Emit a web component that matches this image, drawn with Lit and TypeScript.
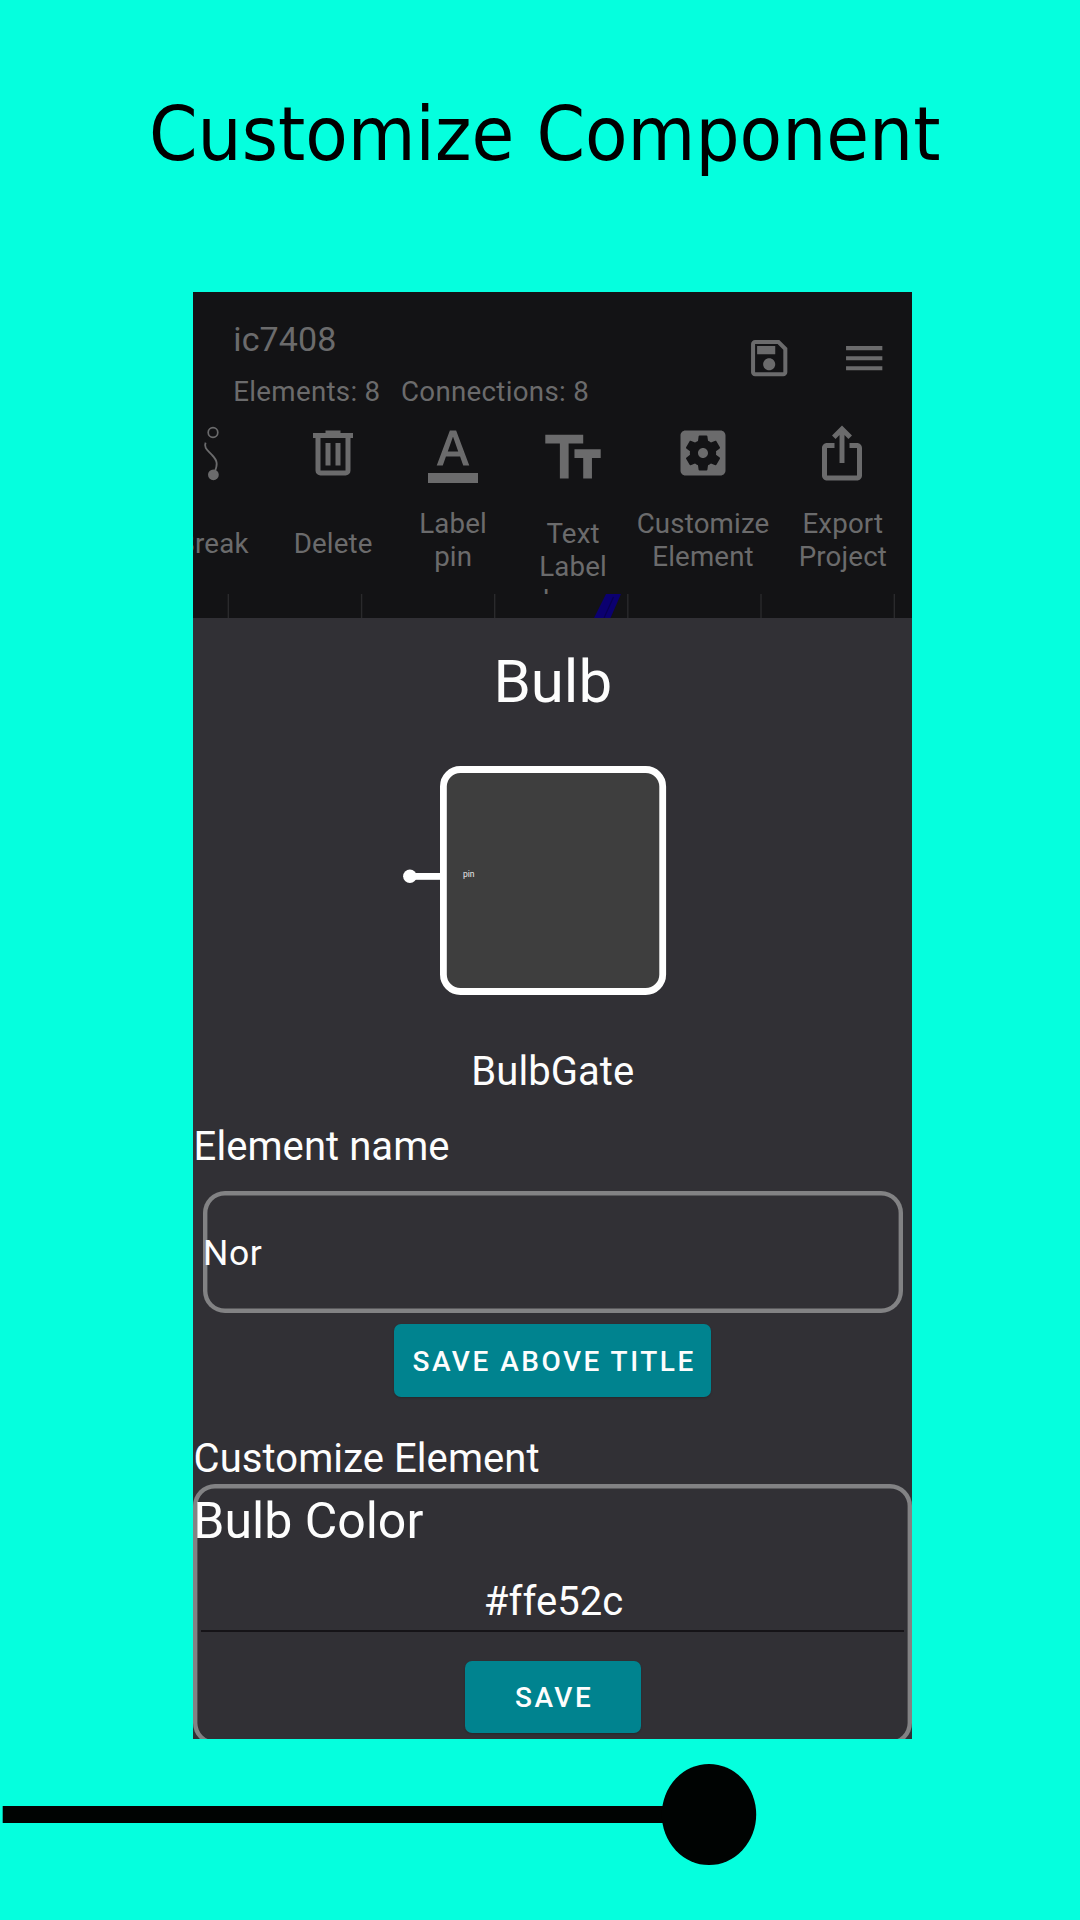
import { LitElement, html, css, svg } from "lit";
import { customElement, property } from "lit/decorators.js";

const ICONS: Record<string, string> = {
  delete:
    "M9,3V4H4V6H5V19A2,2 0 0,0 7,21H17A2,2 0 0,0 19,19V6H20V4H15V3H9M7,6H17V19H7V6M9,8V17H11V8H9M13,8V17H15V8H13Z",
  labelPin:
    "M2 20h20v4H2v-4zm3.49-3h2.42l1.27-3.58h5.65L16.09 17h2.42L13.25 3h-2.5L5.49 17zm4.42-5.61 2.03-5.79h.12l2.03 5.79H9.91z",
  textLabel: "M2.5 4v3h5v12h3V7h5V4h-13zm19 5h-9v3h3v7h3v-7h3V9z",
  customize:
    "M12 10c-1.1 0-2 .9-2 2s.9 2 2 2 2-.9 2-2-.9-2-2-2zm7-7H5c-1.11 0-2 .9-2 2v14c0 1.1.89 2 2 2h14c1.11 0 2-.9 2-2V5c0-1.1-.89-2-2-2zm-1.75 9c0 .23-.02.46-.05.68l1.48 1.16c.13.11.17.3.08.45l-1.4 2.42c-.09.15-.27.21-.43.15l-1.74-.7c-.36.28-.76.51-1.18.69l-.26 1.85c-.03.17-.18.3-.35.3h-2.8c-.17 0-.32-.13-.35-.29l-.26-1.85c-.43-.18-.82-.41-1.18-.69l-1.74.7c-.16.06-.34 0-.43-.15l-1.4-2.42c-.09-.15-.05-.34.08-.45l1.48-1.16c-.03-.23-.05-.46-.05-.69s.02-.46.05-.68l-1.48-1.16c-.13-.11-.17-.3-.08-.45l1.4-2.42c.09-.15.27-.21.43-.15l1.74.7c.36-.28.76-.51 1.18-.69l.26-1.85c.03-.17.18-.3.35-.3h2.8c.17 0 .32.13.35.29l.26 1.85c.43.18.82.41 1.18.69l1.74-.7c.16-.06.34 0 .43.15l1.4 2.42c.09.15.05.34-.08.45l-1.48 1.16c.03.23.05.46.05.69z",
  export:
    "M16 5l-1.42 1.42-1.59-1.59V16h-1.98V4.83L9.42 6.42 8 5l4-4 4 4zm4 5v11c0 1.1-.9 2-2 2H6c-1.11 0-2-.9-2-2V10c0-1.11.89-2 2-2h3v2H6v11h12V10h-3V8h3c1.1 0 2 .89 2 2z",
  save:
    "M17 3H5c-1.11 0-2 .9-2 2v14c0 1.1.89 2 2 2h14c1.1 0 2-.9 2-2V7l-4-4zm2 16H5V5h11.17L19 7.83V19zm-7-7c-1.66 0-3 1.34-3 3s1.34 3 3 3 3-1.34 3-3-1.34-3-3-3zM6 6h9v4H6z",
  menu: "M3 18h18v-2H3v2zm0-5h18v-2H3v2zm0-7v2h18V6H3z",
};

@customElement("app-icon")
export class AppIcon extends LitElement {
  @property() name = "";

  static styles = css`
    :host {
      display: block;
      width: 60px;
      height: 60px;
    }
    .glyph {
      display: block;
      width: 100%;
      height: 100%;
      fill: currentColor;
    }
  `;

  render() {
    if (this.name === "break") {
      return html`<svg class="glyph" viewBox="0 0 60 60">
        ${svg`<circle cx="30" cy="9.5" r="4.8" fill="none" stroke="currentColor" stroke-width="1.7" />
          <path d="M22.6 19.6C20.4 25 25 27.5 29 32C35 38 34.5 42 31.8 48.5" fill="none" stroke="currentColor" stroke-width="1.8" />
          <circle cx="30.4" cy="51.8" r="5.4" />`}
      </svg>`;
    }
    return html`<svg class="glyph" viewBox="0 0 24 24">
      ${svg`<path fill-rule="evenodd" d=${ICONS[this.name]} />`}
    </svg>`;
  }
}

const TOOLS = [
  { icon: "break", lines: ["Break"], cls: "single" },
  { icon: "delete", lines: ["Delete"], cls: "single" },
  { icon: "labelPin", lines: ["Label", "pin"], cls: "" },
  { icon: "textLabel", lines: ["Text", "Label", "here"], cls: "large" },
  { icon: "customize", lines: ["Customize", "Element"], cls: "" },
  { icon: "export", lines: ["Export", "Project"], cls: "" },
];

@customElement("editor-toolbar")
export class EditorToolbar extends LitElement {
  static styles = css`
    :host {
      display: block;
      height: 326px;
      overflow: hidden;
      background: #131315;
      color: #6b6b6c;
      font-family: Roboto, sans-serif;
    }
    .header {
      display: flex;
      justify-content: space-between;
      box-sizing: border-box;
      height: 130.5px;
      padding: 26.7px 23.3px 0 40.3px;
    }
    .project {
      font-size: 34px;
      line-height: 40px;
      letter-spacing: 0.1px;
    }
    .stats {
      display: flex;
      gap: 20.5px;
      margin-top: 16px;
      font-size: 27.7px;
      line-height: 33px;
      letter-spacing: 0.3px;
      white-space: nowrap;
    }
    .actions {
      display: flex;
      gap: 47.4px;
      padding-top: 15.5px;
    }
    .actions app-icon {
      width: 48.4px;
      height: 48.4px;
    }
    .tools {
      display: grid;
      grid-template-columns: repeat(4, 120px) 139.8px 139.8px;
      height: 171.5px;
      margin-left: -40.3px;
      overflow: hidden;
    }
    .tool {
      display: flex;
      flex-direction: column;
      align-items: center;
      gap: 24.3px;
      font-size: 27.7px;
      line-height: 33.3px;
      letter-spacing: 0.15px;
      text-align: center;
    }
    .single {
      gap: 44.3px;
    }
    .large {
      gap: 24.6px;
    }
    .large app-icon {
      width: 70px;
      height: 70px;
    }
    .line {
      display: block;
      padding-left: 0.9px;
    }
    .line:nth-child(3) {
      padding-right: 6px;
    }
    .board {
      display: block;
      width: 719px;
      height: 24px;
    }
  `;

  render() {
    return html`
      <div class="header">
        <div>
          <div class="project">ic7408</div>
          <div class="stats"><span>Elements: 8</span><span>Connections: 8</span></div>
        </div>
        <div class="actions">
          <app-icon name="save"></app-icon>
          <app-icon name="menu"></app-icon>
        </div>
      </div>
      <div class="tools">
        ${TOOLS.map(
          (t) => html`<div class="tool ${t.cls}">
            <app-icon name=${t.icon}></app-icon>
            <div>${t.lines.map((l) => html`<span class="line">${l}</span>`)}</div>
          </div>`
        )}
      </div>
      <svg class="board" viewBox="0 0 719 24">
        ${[35.3, 168.6, 301.7, 434.8, 568, 701.3].map(
          (x) => svg`<rect x=${x - 0.7} y="0" width="1.4" height="24" fill="#2a2a2c" />`
        )}
        <path d="M413 0H428L417.5 24H401Z" fill="#0b0070" />
        <path d="M420.5 3L411 24" stroke="#090050" stroke-width="1.2" />
      </svg>
    `;
  }
}

@customElement("element-panel")
export class ElementPanel extends LitElement {
  static styles = css`
    :host {
      display: flex;
      flex-direction: column;
      align-items: center;
      height: 1121px;
      box-sizing: border-box;
      padding-top: 29.2px;
      overflow: hidden;
      background: #313035;
      color: #fdfdfd;
      font-family: Roboto, sans-serif;
    }
    .heading {
      flex: none;
      font-size: 60px;
      line-height: 70px;
      padding-left: 0.5px;
    }
    .figure {
      display: block;
      flex: none;
      width: 300px;
      height: 229px;
      margin-top: 49.3px;
    }
    .pin {
      font-size: 8.5px;
      fill: #e8e8e8;
    }
    .caption {
      flex: none;
      font-size: 40px;
      line-height: 48px;
      letter-spacing: 0.07px;
      padding-top: 1px;
      padding-left: 0.6px;
      white-space: nowrap;
    }
    .gate {
      margin-top: 51.8px;
    }
    .section {
      align-self: stretch;
    }
    .name {
      margin-top: 26.2px;
    }
    .field {
      align-self: stretch;
      flex: none;
      display: flex;
      align-items: center;
      box-sizing: border-box;
      height: 121.7px;
      margin: 19.5px 9.5px 0 10px;
      padding-top: 3px;
      border-radius: 22px;
      box-shadow: inset 0 0 0 4.4px #828284;
      font-size: 35.5px;
      letter-spacing: 0.6px;
    }
    .button {
      flex: none;
      display: flex;
      align-items: center;
      justify-content: center;
      box-sizing: border-box;
      height: 72.5px;
      padding-top: 1.6px;
      border-radius: 7px;
      background: #00838f;
      box-shadow: 0 1px 2px rgba(0, 0, 0, 0.2);
      font-size: 28px;
      font-weight: 500;
      letter-spacing: 2.5px;
      text-indent: 3.2px;
      white-space: nowrap;
    }
    .wide {
      width: 317.7px;
      margin-top: 11.8px;
    }
    .small {
      width: 176px;
      margin-top: 28.5px;
    }
    .customize {
      margin-top: 37.3px;
    }
    .card {
      align-self: stretch;
      display: flex;
      flex-direction: column;
      align-items: center;
      box-sizing: border-box;
      flex: none;
      height: 261px;
      margin-top: 0.6px;
      padding-top: 8px;
      border-radius: 22px;
      box-shadow: inset 0 0 0 4.4px #828284;
    }
    .property {
      align-self: stretch;
      font-size: 50px;
      line-height: 58px;
      padding-left: 0.3px;
    }
    .value {
      margin-top: 27.3px;
      padding-left: 2px;
    }
    .rule {
      align-self: stretch;
      height: 2px;
      margin: 4.2px 8px 0;
      background: #151317;
    }
  `;

  render() {
    return html`
      <div class="heading">Bulb</div>
      <svg class="figure" viewBox="0 0 300 229">
        <rect x="40.4" y="3.5" width="219.3" height="222" rx="17" fill="#3e3e3e" stroke="#fff" stroke-width="6.8" />
        <rect x="7" y="107" width="32" height="6.8" fill="#fff" />
        <circle cx="6.9" cy="110.3" r="6.8" fill="#fff" />
        <text class="pin" x="60" y="110.5">pin</text>
      </svg>
      <div class="caption gate">BulbGate</div>
      <div class="caption section name">Element name</div>
      <div class="field">Nor</div>
      <div class="button wide">SAVE ABOVE TITLE</div>
      <div class="caption section customize">Customize Element</div>
      <div class="card">
        <div class="property">Bulb Color</div>
        <div class="caption value">#ffe52c</div>
        <div class="rule"></div>
        <div class="button small">SAVE</div>
      </div>
    `;
  }
}

@customElement("app-root")
export class AppRoot extends LitElement {
  static styles = css`
    :host {
      display: flex;
      flex-direction: column;
      width: 1080px;
      height: 1920px;
      overflow: hidden;
      background: #05ffde;
    }
    .title {
      box-sizing: border-box;
      flex: none;
      height: 292px;
      padding: 86px 0 0 149px;
      color: #000;
      font-family: "DejaVu Sans", sans-serif;
      font-size: 69.6px;
      line-height: 100px;
      white-space: nowrap;
    }
    .stretch {
      display: inline-block;
      transform: translateY(-0.5px) scaleY(1.065);
      transform-origin: 0 74px;
    }
    .screen {
      flex: none;
      width: 719px;
      height: 1447px;
      margin-left: 193px;
      overflow: hidden;
    }
    .progress {
      display: block;
      flex: none;
      width: 1080px;
      height: 181px;
    }
  `;

  render() {
    return html`
      <div class="title"><span class="stretch">Customize Component</span></div>
      <div class="screen">
        <editor-toolbar></editor-toolbar>
        <element-panel></element-panel>
      </div>
      <svg class="progress" viewBox="0 0 1080 181">
        <rect x="2.7" y="67" width="717" height="17" fill="#000302" />
        <ellipse cx="709" cy="75.5" rx="47.2" ry="50.5" fill="#000302" />
      </svg>
    `;
  }
}
